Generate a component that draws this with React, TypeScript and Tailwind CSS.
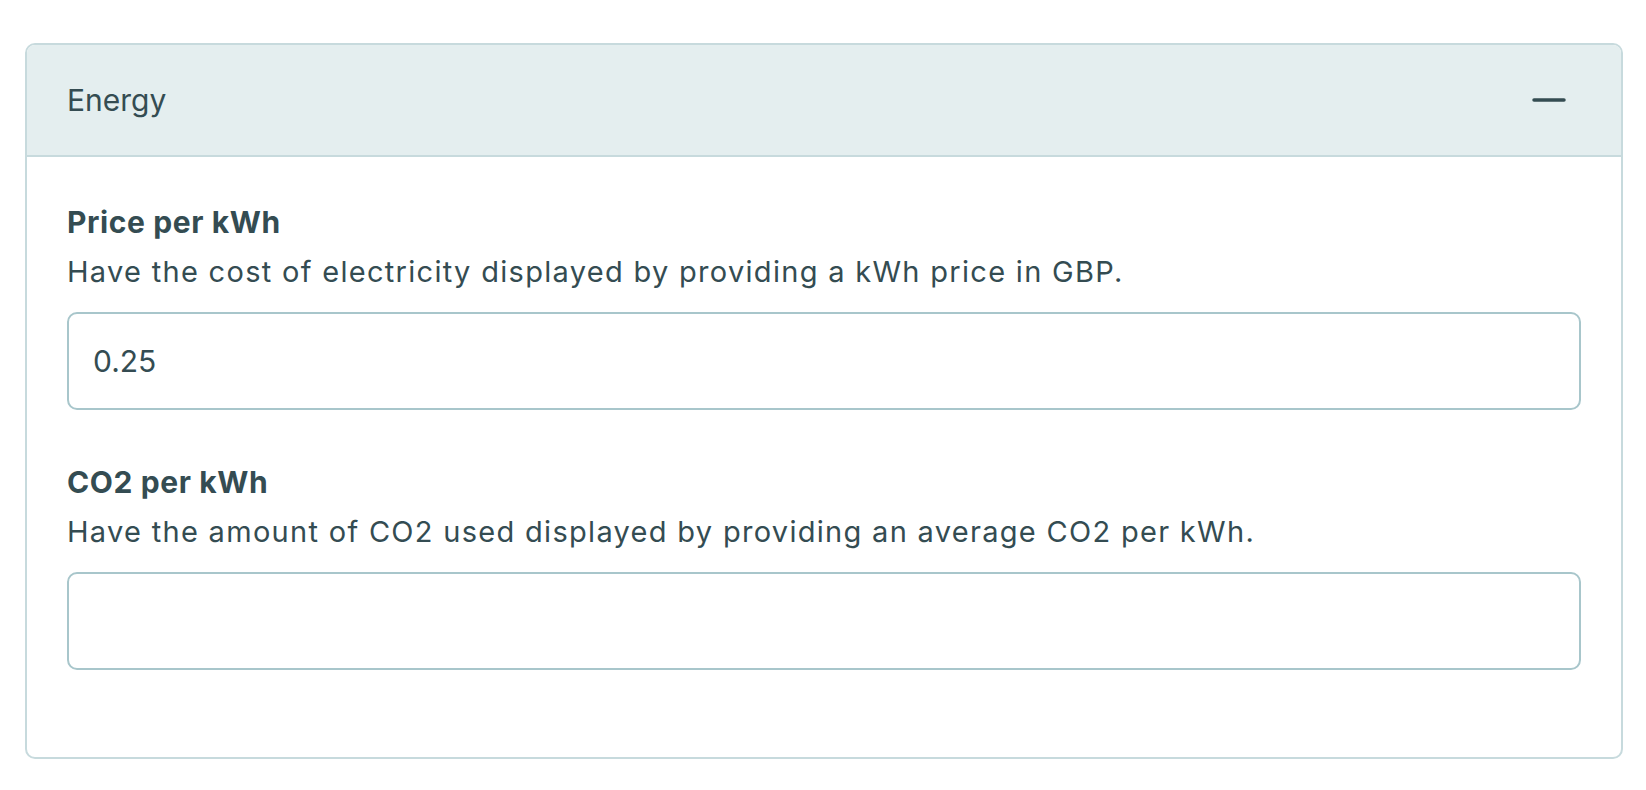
import { useState } from 'react';

interface FieldProps {
  label: string;
  help: string;
  value: string;
  onChange: (v: string) => void;
  first?: boolean;
}

function Field({ label, help, value, onChange, first }: FieldProps) {
  return (
    <div className={first ? '' : 'mt-[50px]'}>
      <label className="block text-[30px] leading-[44px] font-bold tracking-[0.6px]">{label}</label>
      <p className="mt-[6px] text-[29px] leading-[44px] tracking-[1.3px]">{help}</p>
      <input
        type="text"
        value={value}
        onChange={(e) => onChange(e.target.value)}
        className="mt-[18px] block w-full h-[98px] px-[24px] border-2 border-[#a8c6cb] rounded-[10px] bg-white text-[30px] text-[#344c52] outline-none"
      />
    </div>
  );
}

export default function App() {
  const [open, setOpen] = useState(true);
  const [price, setPrice] = useState('0.25');
  const [co2, setCo2] = useState('');

  return (
    <div
      className="min-h-screen bg-white pt-[43px] pl-[25px] pr-[23px] text-[#344c52]"
      style={{ fontFamily: 'Inter, "Noto Sans", sans-serif' }}
    >
      <div className="border-2 border-[#c7dadd] rounded-[10px] overflow-hidden">
        <button
          type="button"
          onClick={() => setOpen(!open)}
          className="w-full h-[112px] flex items-center justify-between pl-[40px] pr-[55px] bg-[#e4eeef] border-b-2 border-[#c7dadd] text-left"
        >
          <span className="text-[30px]">Energy</span>
          <svg width="34" height="6" viewBox="0 0 34 6">
            <line x1="2" y1="3" x2="32" y2="3" stroke="#344c52" strokeWidth="3.5" strokeLinecap="round" />
          </svg>
        </button>
        {open && (
          <div className="px-[40px] pt-[43px] pb-[87px]">
            <Field
              first
              label="Price per kWh"
              help="Have the cost of electricity displayed by providing a kWh price in GBP."
              value={price}
              onChange={setPrice}
            />
            <Field
              label="CO2 per kWh"
              help="Have the amount of CO2 used displayed by providing an average CO2 per kWh."
              value={co2}
              onChange={setCo2}
            />
          </div>
        )}
      </div>
    </div>
  );
}
